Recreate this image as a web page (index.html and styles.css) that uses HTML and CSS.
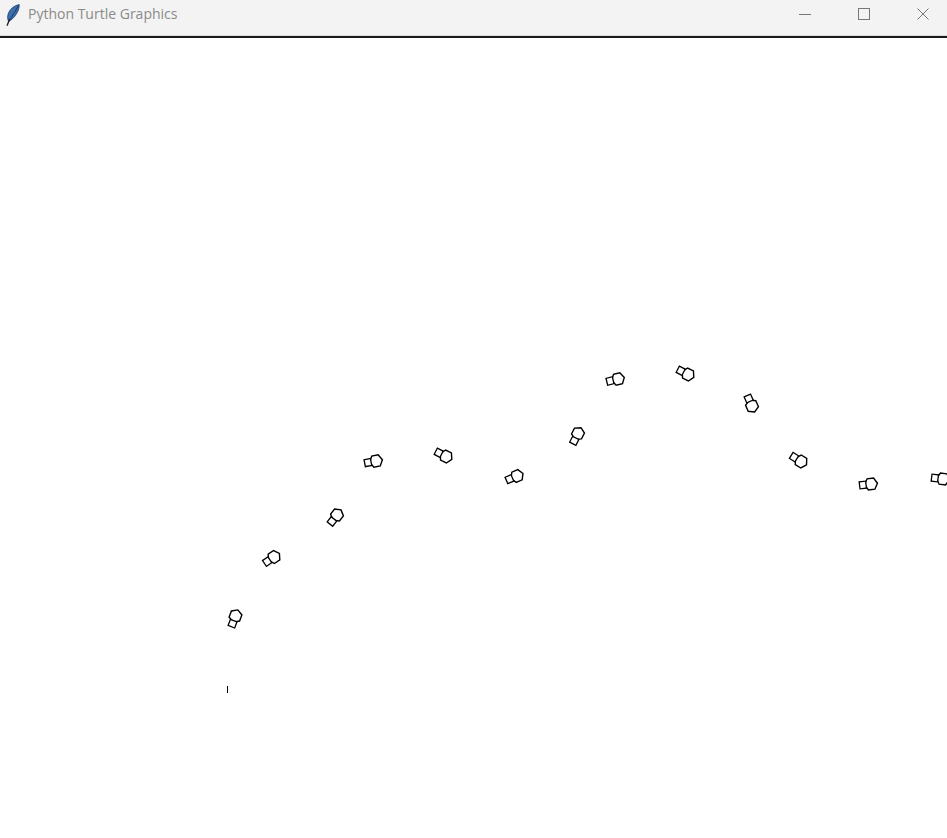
FILE: index.html
```html
<!DOCTYPE html>
<html>
<head>
<meta charset="utf-8">
<title>Python Turtle Graphics</title>
<link rel="stylesheet" href="styles.css">
</head>
<body>
<div class="window">
  <div class="titlebar">
    <div class="title-left">
      <svg class="feather" width="14" height="22" viewBox="0 0 14 22">
        <path d="M13.2 0.6 C8 1.6 3.2 5.4 1.9 11 C1.3 13.8 1.8 16 2.8 17.4 C7.4 15 10.6 10.4 12.2 6.4 C13 4.4 13.3 2.4 13.2 0.6 Z" fill="#3b6fae" stroke="#1d3f6e" stroke-width="0.8"/>
        <path d="M12.6 1.6 C10.4 5.6 6.8 11 2.8 17.4" stroke="#183258" stroke-width="0.9" fill="none"/>
        <path d="M3.4 15.8 L1.2 21.2" stroke="#222" stroke-width="1.4" stroke-linecap="round"/>
      </svg>
      <span class="title-text">Python Turtle Graphics</span>
    </div>
    <div class="controls">
      <div class="ctl">
        <svg width="12" height="12" viewBox="0 0 12 12"><path d="M0 6.5 H12" stroke="#777" stroke-width="1"/></svg>
      </div>
      <div class="ctl">
        <svg width="12" height="12" viewBox="0 0 12 12"><rect x="0.5" y="0.5" width="11" height="11" fill="none" stroke="#777" stroke-width="1"/></svg>
      </div>
      <div class="ctl">
        <svg width="12" height="12" viewBox="0 0 12 12"><path d="M0.5 0.5 L11.5 11.5 M11.5 0.5 L0.5 11.5" stroke="#777" stroke-width="1"/></svg>
      </div>
    </div>
  </div>
  <div class="canvas">
    <svg class="drawing" width="947" height="800" viewBox="0 38 947 800">
      <defs>
        <g id="t">
          <polygon points="6.5,0 3.25,5.6 -3.25,5.6 -6.5,0 -3.25,-5.6 3.25,-5.6" fill="#fff" stroke="#000" stroke-width="1.4"/>
          <rect x="-11.5" y="-3.5" width="6.5" height="7" fill="#fff" stroke="#000" stroke-width="1.3"/>
        </g>
      </defs>
      <use href="#t" transform="translate(235.5 616) rotate(-69)"/>
      <use href="#t" transform="translate(274 557) rotate(-34)"/>
      <use href="#t" transform="translate(337 515) rotate(-52)"/>
      <use href="#t" transform="translate(376 461) rotate(-11)"/>
      <use href="#t" transform="translate(446 456.5) rotate(27)"/>
      <use href="#t" transform="translate(517 476) rotate(-23)"/>
      <use href="#t" transform="translate(578 433.5) rotate(-63)"/>
      <use href="#t" transform="translate(618 379) rotate(-14)"/>
      <use href="#t" transform="translate(688 374.5) rotate(27)"/>
      <use href="#t" transform="translate(752 406) rotate(66)"/>
      <use href="#t" transform="translate(801 461.5) rotate(32)"/>
      <use href="#t" transform="translate(871 484) rotate(-7)"/>
      <use href="#t" transform="translate(943 479) rotate(7)"/>
      <line x1="227.5" y1="686" x2="227.5" y2="693" stroke="#000" stroke-width="1"/>
    </svg>
  </div>
</div>
</body>
</html>
```
FILE: styles.css
```css
html, body {
  margin: 0;
  padding: 0;
  background: #ffffff;
  overflow: hidden;
}
.window {
  width: 947px;
  height: 838px;
  display: flex;
  flex-direction: column;
}
.titlebar {
  height: 35px;
  background: #f3f3f3;
  border-bottom: 1px solid #dcdcdc;
  display: flex;
  align-items: center;
  justify-content: space-between;
  flex: none;
}
.title-left {
  display: flex;
  align-items: center;
  padding-left: 6px;
  gap: 8px;
}
.feather {
  display: block;
  margin-top: -6px;
}
.title-text {
  font-family: "Open Sans", "Noto Sans", sans-serif;
  font-size: 14px;
  color: #8a8a8a;
  margin-top: -8px;
}
.controls {
  display: flex;
  gap: 13px;
  padding-right: 1px;
  margin-top: -7px;
}
.ctl {
  width: 46px;
  height: 34px;
  display: flex;
  align-items: center;
  justify-content: center;
}
.canvas {
  border-top: 2px solid #1a1a1a;
  flex: 1;
  background: #fff;
}
.drawing {
  display: block;
}
```
